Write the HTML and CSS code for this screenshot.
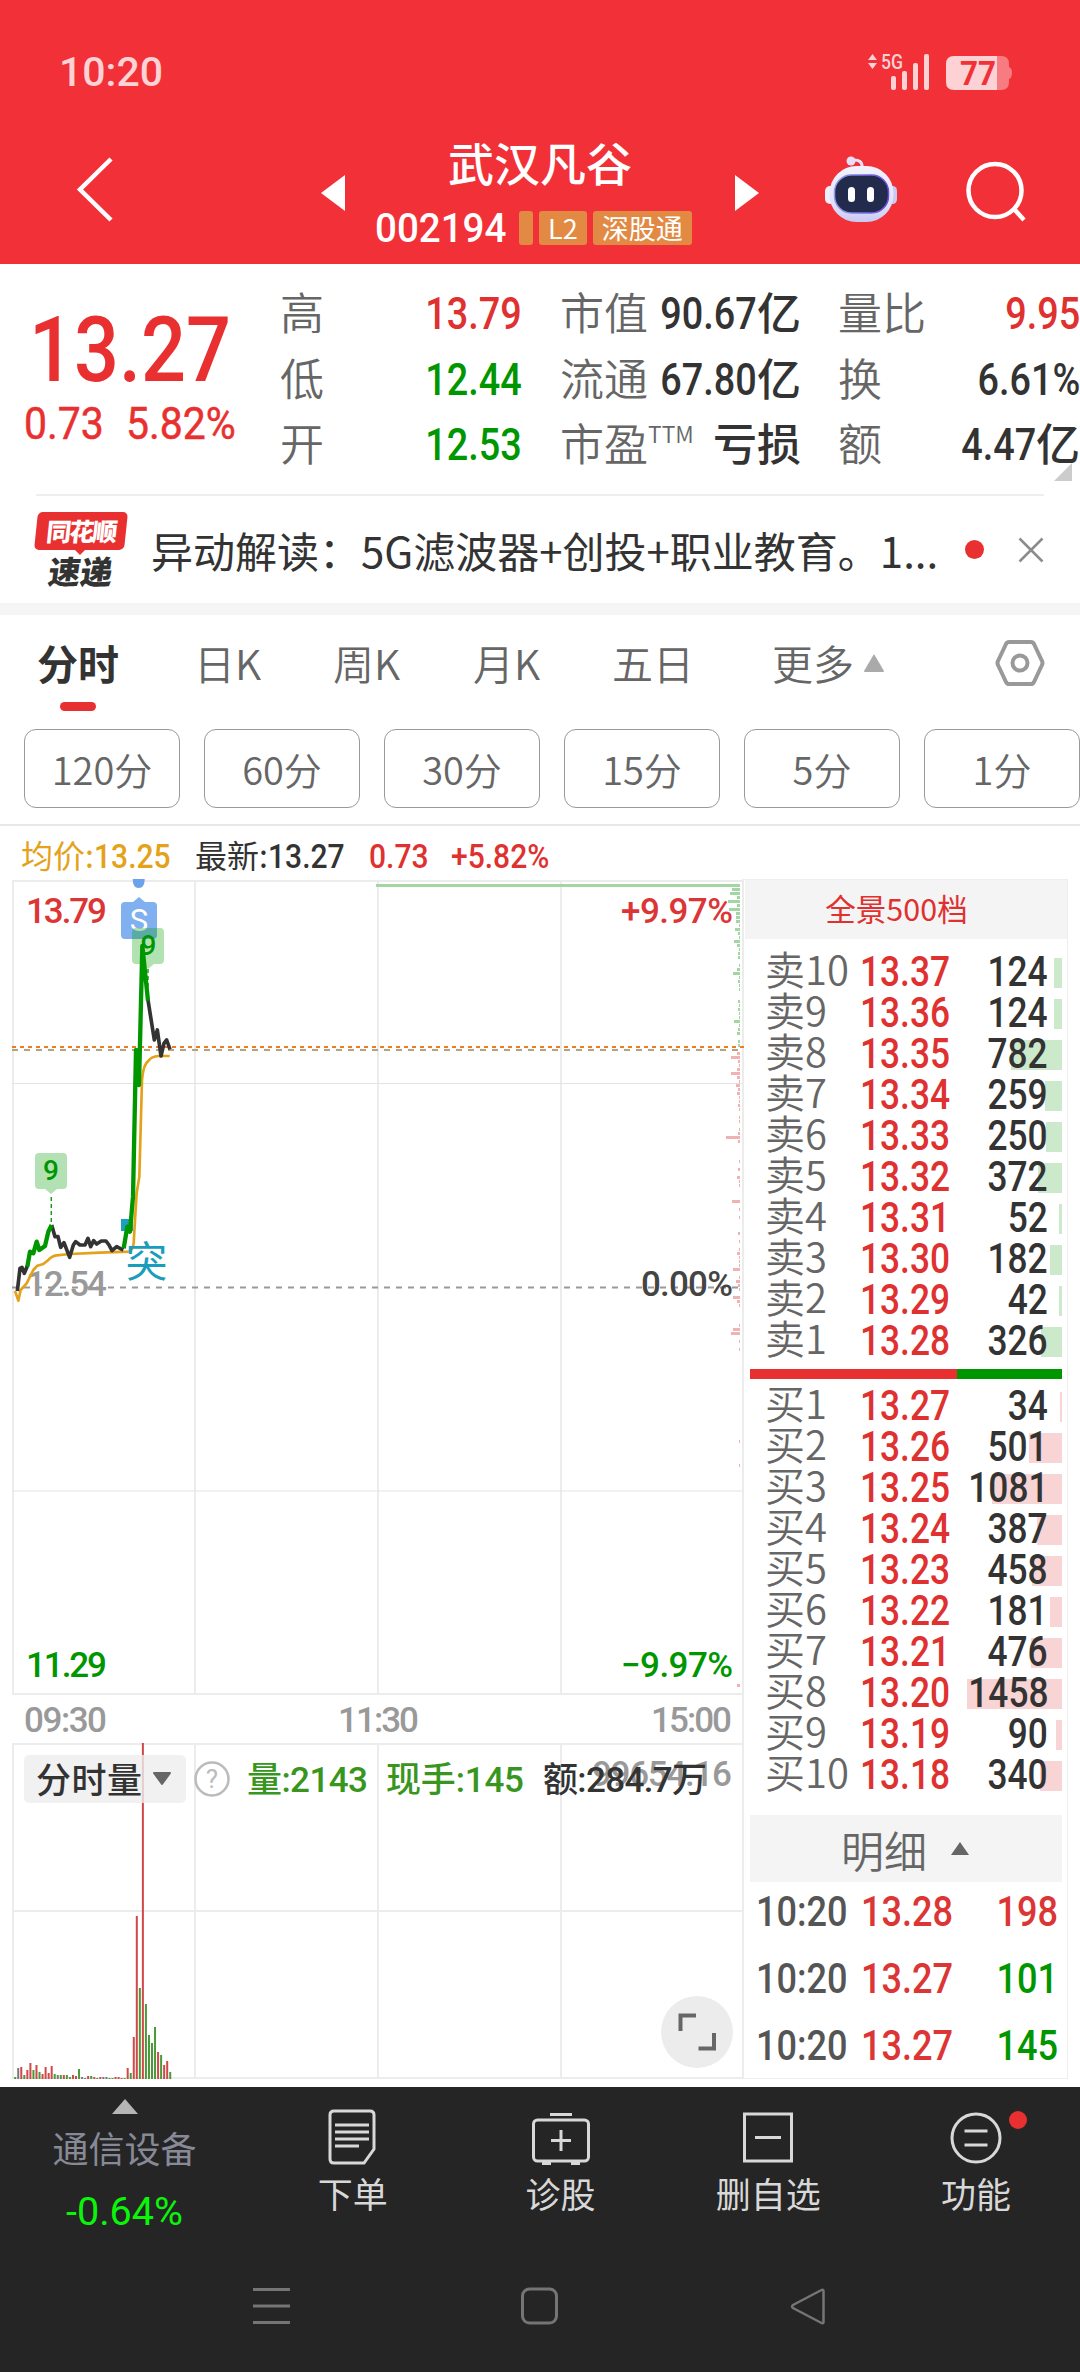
FILE: index.html
```html
<!DOCTYPE html>
<html lang="zh-CN">
<head>
    <meta charset="UTF-8">
    <meta name="viewport" content="width=device-width, initial-scale=1.0">
    <title>武汉凡谷 002194</title>
    <link rel="stylesheet" href="styles.css">
</head>
<body>
    <header class="header">
        <div class="status">
            <span class="clock num">10:20</span>
            <svg class="signal" width="150" height="50" viewBox="865 48 150 50">
                <g fill="#fcd2d4">
                    <path d="M868 60l4.500-6 4.500 6zM868 63l4.500 6 4.500-6z"/>
                    <text class="net" x="881" y="69" textLength="22" lengthAdjust="spacingAndGlyphs">5G</text>
                    <rect x="891" y="76" width="5" height="14" rx="2"/>
                    <rect x="902" y="71" width="5" height="19" rx="2"/>
                    <rect x="913" y="63" width="5" height="27" rx="2"/>
                    <rect x="924" y="54" width="5" height="36" rx="2"/>
                    <path d="M954 56h43v34h-43q-8 0-8-8v-18q0-8 8-8z"/>
                </g>
                <path d="M997 56h4q8 0 8 8v3q3 1 3 6t-3 6v3q0 8-8 8h-4z" fill="#f67c81"/>
                <text class="battery" x="960" y="85" textLength="36" lengthAdjust="spacingAndGlyphs">77</text>
            </svg>
        </div>
        <nav class="nav">
            <svg class="back" width="44" height="70" viewBox="0 0 44 70"><path d="M38 4L7 34.500 38 65" fill="none" stroke="#fff" stroke-width="4.500"/></svg>
            <svg class="prev" width="24" height="36" viewBox="0 0 24 36"><path d="M24 0v36L0 18z" fill="#fff"/></svg>
            <div class="stock">
                <div class="name">武汉凡谷</div>
                <div class="code">
                    <span class="num">002194</span>
                    <i class="tag cut"></i>
                    <i class="tag">L2</i>
                    <i class="tag">深股通</i>
                </div>
            </div>
            <svg class="next" width="24" height="36" viewBox="0 0 24 36"><path d="M0 0v36l24-18z" fill="#fff"/></svg>
            <svg class="robot" width="74" height="70" viewBox="0 0 74 70">
                <defs>
                    <linearGradient id="shell" x1="0" y1="0" x2="0" y2="1"><stop offset="0" stop-color="#f3f3fc"/><stop offset=".7" stop-color="#dfe0fa"/><stop offset="1" stop-color="#c9c9f3"/></linearGradient>
                    <linearGradient id="rim" x1="0" y1="0" x2="1" y2="0"><stop offset="0" stop-color="#8f9be8"/><stop offset="1" stop-color="#6a4be0"/></linearGradient>
                </defs>
                <path d="M37 12q1-9-10-8" fill="none" stroke="#e6e2fa" stroke-width="3"/>
                <circle cx="26" cy="5" r="4.500" fill="#e9dff5"/>
                <rect x="0" y="30" width="10" height="18" rx="5" fill="#eeeefc"/>
                <rect x="63" y="30" width="9" height="18" rx="4.500" fill="#c9c9f3"/>
                <rect x="4.500" y="10" width="64" height="56" rx="27" fill="url(#shell)"/>
                <rect x="9.500" y="19" width="54" height="38" rx="17" fill="#232b4d" stroke="url(#rim)" stroke-width="1.500"/>
                <rect x="23" y="31" width="7" height="15" rx="3.500" fill="#fff"/>
                <rect x="42" y="31" width="7" height="15" rx="3.500" fill="#fff"/>
            </svg>
            <svg class="search" width="64" height="64" viewBox="0 0 64 64" fill="none" stroke="#fff" stroke-width="4.500"><circle cx="31" cy="29.500" r="26.500"/><path d="M50 48l10 11"/></svg>
        </nav>
    </header>

    <section class="quote">
        <div class="price">
            <div class="last"><span class="num">13.27</span></div>
            <div class="change"><span class="num">0.73</span><span class="num">5.82%</span></div>
        </div>
        <dl class="col c1">
            <dt>高</dt><dd class="red"><span class="num">13.79</span></dd>
            <dt>低</dt><dd class="green"><span class="num">12.44</span></dd>
            <dt>开</dt><dd class="green"><span class="num">12.53</span></dd>
        </dl>
        <dl class="col c2">
            <dt>市值</dt><dd><span class="num">90.67</span>亿</dd>
            <dt>流通</dt><dd><span class="num">67.80</span>亿</dd>
            <dt>市盈<sup>TTM</sup></dt><dd>亏损</dd>
        </dl>
        <dl class="col c3">
            <dt>量比</dt><dd class="red"><span class="num">9.95</span></dd>
            <dt>换</dt><dd><span class="num">6.61%</span></dd>
            <dt>额</dt><dd><span class="num">4.47</span>亿</dd>
        </dl>
        <i class="corner"></i>
    </section>

    <section class="news">
        <div class="logo"><b>同花顺</b><em>速递</em></div>
        <p>异动解读：5G滤波器+创投+职业教育。1...</p>
        <i class="dot"></i>
        <svg width="26" height="26" viewBox="0 0 26 26"><path d="M1.500 1.500l23 23M24.500 1.500l-23 23" stroke="#8c8c8c" stroke-width="2.500"/></svg>
    </section>

    <section class="period">
        <ul class="tabs">
            <li class="on">分时</li>
            <li>日K</li>
            <li>周K</li>
            <li>月K</li>
            <li>五日</li>
            <li>更多<svg width="24" height="20" viewBox="0 0 24 20"><path d="M12 1l10 17q0 1-1 1H3q-1 0-1-1z" fill="#aaa"/></svg></li>
            <li class="gear"><svg width="50" height="48" viewBox="0 0 50 48" fill="none" stroke="#999" stroke-width="4"><path d="M14 3h22q2 0 3 2l8 17q1 2 0 4l-8 17q-1 2-3 2H14q-2 0-3-2L3 26q-1-2 0-4l8-17q1-2 3-2z"/><circle cx="25" cy="24" r="7.500"/></svg></li>
        </ul>
        <div class="minutes">
            <button>120分</button>
            <button>60分</button>
            <button>30分</button>
            <button>15分</button>
            <button>5分</button>
            <button>1分</button>
        </div>
    </section>

    <div class="legend">
        <span class="avg">均价:<span class="num">13.25</span></span>
        <span>最新:<span class="num">13.27</span></span>
        <span class="red"><span class="num">0.73</span></span>
        <span class="red"><span class="num">+5.82%</span></span>
    </div>

    <main class="main">
        <svg class="chart" width="744" height="1208" viewBox="0 879 744 1208">
            <!-- grid -->
            <g stroke="#ececec" stroke-width="2" fill="none">
                <path d="M12 881H744M12 1694H744M13 880V1695M195 881V1694M378 881V1694M561 881V1694"/>
                <path d="M12 1083.500H744M12 1491H744" stroke="#e3e3e3" stroke-width="1"/>
                <path d="M12 1744H744M12 1911H744M12 2078H744M13 1743V2079M195 1743V2079M378 1743V2079M561 1743V2079"/>
                <path d="M743.500 879V2079" stroke-width="3"/>
            </g>
            <path d="M12 1287.500H739" stroke="#999" stroke-width="2" stroke-dasharray="6 6"/>
            <path d="M12 1050H739" stroke="#b7a27b" stroke-width="2" stroke-dasharray="6 6"/>
            <path d="M12 1047H744" stroke="#ed7a25" stroke-width="2" stroke-dasharray="4 4"/>
            <g id="depth"></g>
            <g id="volume"></g>

            <text class="d grey" x="26" y="1295.500" textLength="81">12.54</text>

            <!-- signal markers -->
            <path d="M132.700 879h12q0 9-6 9t-6-9z" fill="#6aa3ec"/>
            <path d="M133 902l6-5 6 5h8q4 0 4 4v29q0 4-4 4h-28q-4 0-4-4v-29q0-4 4-4z" fill="#81b0f0"/>
            <text class="mark" x="139" y="931" fill="#fff">S</text>
            <path d="M136 928h24q4 0 4 4v28q0 4-4 4h-6l-6 5-6-5h-6q-4 0-4-4v-28q0-4 4-4z" fill="#00a000" fill-opacity=".3"/>
            <path d="M39 1153h24q4 0 4 4v28q0 4-4 4h-6l-6 5-6-5h-6q-4 0-4-4v-28q0-4 4-4z" fill="#b3e1b3"/>
            <text class="mark nine" x="51" y="1180">9</text>
            <text class="mark nine" x="148.500" y="955">9</text>
            <path d="M51.300 1197v28M148 969v20" stroke="#1b9a1b" stroke-width="1.500" stroke-dasharray="4 3"/>
            <rect x="121" y="1219" width="12" height="12" fill="#1aa0c0"/>

            <g transform="translate(0 860) scale(.33333)" fill="none" stroke-linejoin="round">
                <path stroke="#e3a21a" stroke-width="8" d="M45 1293L55 1322 62 1290 80 1270 100 1230 112 1217 130 1212 145 1200Q155 1188 170 1186L210 1182 300 1178 385 1175Q398 1172 401 1150L405 1080 410 1000 418 950 426 660Q430 612 445 603 455 589 475 588H509"/>
                <path stroke="#333" stroke-width="11" d="M52 1293L60 1225 66 1222 73 1240 82 1218M155 1095L165 1130 174 1130 182 1162 192 1148 209 1192 220 1155 227 1145 240 1155H255L264 1135 272 1160 281 1142 290 1152 304 1143H318L327 1155 336 1172 350 1160 360 1165 370 1170M444 420L463 540 472 510 483 588 492 550 500 540 510 568"/>
                <path stroke="#009600" stroke-width="13" d="M82 1220L90 1175 100 1180 110 1145 118 1170 135 1158 145 1115 155 1095M371 1165L382 1100 390 1115 399 1010 408 570 417 675 427 258 444 422"/>
            </g>
            <text class="tu" x="146.500" y="1277">突</text>

            <!-- axis labels -->
            <text class="d red" x="26" y="923" textLength="81">13.79</text>
            <text class="d red" x="621" y="923" textLength="112">+9.97%</text>
            <text class="d dark" x="641" y="1295.500" textLength="92">0.00%</text>
            <text class="d green" x="26" y="1676.500" textLength="81">11.29</text>
            <text class="d green" x="621" y="1676.500" textLength="112">−9.97%</text>
            <text class="d grey" x="24" y="1732" textLength="83">09:30</text>
            <text class="d grey" x="338" y="1732" textLength="81">11:30</text>
            <text class="d grey" x="651" y="1732" textLength="81">15:00</text>

            <!-- volume header -->
            <rect x="24" y="1755" width="162" height="48" rx="5" fill="#eee" fill-opacity=".8"/>
            <text class="cn" x="36" y="1793" textLength="106">分时量</text>
            <path d="M154 1773h16l-8 11z" fill="#666" stroke="#666" stroke-linejoin="round" stroke-width="2"/>
            <circle cx="212" cy="1779" r="16.500" fill="none" stroke="#bbb" stroke-width="2.500"/>
            <text class="ask" x="212" y="1788">?</text>
            <text class="cn vol" x="247" y="1792" textLength="121">量:2143</text>
            <text class="cn vol" x="386" y="1792" textLength="138">现手:145</text>
            <text class="d grey" x="592" y="1786" textLength="140">99654.16</text>
            <text class="cn" x="543" y="1792" textLength="164">额:284.7万</text>

            <circle cx="697" cy="2032" r="36" fill="#ececec"/>
            <path d="M680.500 2031V2015.500H696M698.500 2048.500H714V2033" fill="none" stroke="#666" stroke-width="4"/>
        </svg>

        <aside class="book">
            <div class="book-head">全景500档</div>
            <div class="rows" id="sell"></div>
            <div class="ratio"><i></i></div>
            <div class="rows" id="buy"></div>
            <div class="detail-head">明细<svg width="18" height="13" viewBox="0 0 18 13"><path d="M9 0l9 13H0z" fill="#666"/></svg></div>
            <div class="trade"><span class="num">10:20</span><span class="num red">13.28</span><span class="num red">198</span></div>
            <div class="trade"><span class="num">10:20</span><span class="num red">13.27</span><span class="num green">101</span></div>
            <div class="trade"><span class="num">10:20</span><span class="num red">13.27</span><span class="num green">145</span></div>
        </aside>
    </main>

    <footer class="footer">
        <div class="actions">
            <div class="sector">
                <svg width="26" height="15" viewBox="0 0 26 15"><path d="M13 0l13 15H0z" fill="#b5b5b5"/></svg>
                <span>通信设备</span>
                <b>-0.64%</b>
            </div>
            <div class="action">
                <svg width="60" height="60" viewBox="0 0 60 60" fill="none" stroke="#d8d8d8" stroke-width="3"><path d="M11 4h36q4 0 4 4v34L41 56H11q-4 0-4-4V8q0-4 4-4z"/><path d="M12 18h34M12 25h34M12 32h34M12 39h24"/></svg>
                下单
            </div>
            <div class="action">
                <svg width="60" height="60" viewBox="0 0 60 60" fill="none" stroke="#d8d8d8" stroke-width="3"><rect x="2.500" y="13" width="55" height="41" rx="4"/><path d="M19 7.500h22M30 23v21M20 33.500h20M11 56.500h9M40 56.500h9"/></svg>
                诊股
            </div>
            <div class="action">
                <svg width="60" height="60" viewBox="0 0 60 60" fill="none" stroke="#d8d8d8" stroke-width="3"><rect x="6.500" y="7" width="47" height="47"/><path d="M17 30.500h26"/></svg>
                删自选
            </div>
            <div class="action">
                <svg width="60" height="60" viewBox="0 0 60 60" fill="none" stroke="#d8d8d8" stroke-width="3"><circle cx="30" cy="31" r="24"/><path d="M18.500 24h23M18.500 38h23"/></svg>
                功能
                <i class="badge"></i>
            </div>
        </div>
        <div class="system">
            <svg width="38" height="38" viewBox="0 0 38 38"><path d="M0 2.500h37M0 19h37M0 35.500h37" stroke="#757575" stroke-width="3"/></svg>
            <svg width="38" height="38" viewBox="0 0 38 38"><rect x="1.500" y="2" width="34" height="34" rx="7" fill="none" stroke="#757575" stroke-width="3"/></svg>
            <svg width="38" height="38" viewBox="0 0 38 38"><path d="M34.500 4v31q0 2-2 1L4 21q-2-1.500 0-3L32.500 3q2-1 2 1z" fill="none" stroke="#757575" stroke-width="2.500"/></svg>
        </div>
    </footer>
    <script src="script.js"></script>
</body>
</html>
```
FILE: styles.css
```css
* {
    box-sizing: border-box;
}
body {
    margin: 0;
    width: 1080px;
    height: 2372px;
    overflow: hidden;
    background: #fff;
    color: #333;
    font-family: "Noto Sans CJK SC", sans-serif;
}
ul, dl, dd, p {
    margin: 0;
    padding: 0;
    list-style: none;
}
i, em {
    font-style: normal;
}
svg {
    display: block;
    flex: none;
}
.num {
    display: inline-block;
    font-family: Roboto, sans-serif;
    font-weight: 500;
    transform: scaleX(.84);
    transform-origin: 0 50%;
}
.red { color: #e03131; }
.green { color: #009600; }

/* header */
.header {
    height: 264px;
    background: #f23038;
    color: #fff;
}
.status {
    display: flex;
    justify-content: space-between;
    height: 120px;
    padding: 48px 65px 0 59px;
}
.clock {
    font-size: 41px;
    line-height: 48px;
    color: #fcd2d4;
    transform: none;
}
.net {
    font: 500 20px Roboto, sans-serif;
}
.battery {
    font: 700 33px Roboto, sans-serif;
    fill: #f23038;
}
.nav {
    display: flex;
    height: 144px;
    padding-left: 73px;
}
.back { margin-top: 35px; }
.prev { margin: 55px 0 0 204px; }
.next { margin-top: 55px; }
.stock {
    width: 390px;
    padding-top: 8px;
}
.name {
    font-size: 46px;
    line-height: 66px;
    text-align: center;
    font-weight: 500;
}
.code {
    display: flex;
    align-items: center;
    height: 40px;
    margin-top: 10px;
    padding: 8px 0 0 30px;
}
.code .num {
    width: 144px;
    font-size: 41px;
    transform: scaleX(.94);
}
.tag {
    height: 34px;
    margin-right: 6px;
    padding: 0 9px;
    border-radius: 3px;
    background: #e28a44;
    font-size: 27px;
    line-height: 33px;
}
.tag.cut {
    width: 14px;
    padding: 0;
}
.robot { margin: 36px 0 0 66px; }
.search { margin: 41px 0 0 65px; }

/* quote */
.quote {
    position: relative;
    display: flex;
    height: 232px;
    padding-top: 16px;
}
.quote:after {
    content: "";
    position: absolute;
    left: 36px;
    right: 36px;
    bottom: 0;
    height: 2px;
    background: #eee;
}
.price {
    width: 280px;
    color: #e93030;
}
.last {
    padding: 12px 0 0 29px;
    font-size: 90px;
    line-height: 100px;
}
.last .num {
    transform: scaleX(.88);
}
.change {
    display: flex;
    margin-top: -5px;
    padding-left: 24px;
    font-size: 45px;
    line-height: 56px;
}
.change .num {
    width: 102px;
    font-weight: 400;
    -webkit-text-stroke: .5px;
    transform: scaleX(.91);
}
.col {
    display: grid;
    grid-template-columns: auto minmax(0, 1fr);
    grid-auto-rows: 65.5px;
    font-size: 44px;
    line-height: 62px;
}
.c1 { width: 242px; }
.c2 { width: 241px; margin-left: 38px; }
.c3 { width: 242px; margin-left: 37px; }
.col dt {
    color: #666;
    font-weight: 350;
    white-space: nowrap;
}
.col dd {
    display: flex;
    justify-content: flex-end;
    font-weight: 500;
    white-space: nowrap;
}
.col .num {
    padding-top: 3px;
    font-size: 45px;
    transform-origin: 100% 50%;
}
sup {
    font-size: 23px;
    line-height: 20px;
    vertical-align: 18px;
}
.corner {
    position: absolute;
    right: 8px;
    bottom: 15px;
    border-left: 18px solid transparent;
    border-bottom: 18px solid #ccc;
}

/* news */
.news {
    display: flex;
    align-items: center;
    height: 119px;
    padding: 0 36px;
    border-bottom: 12px solid #f5f5f5;
}
.logo {
    position: relative;
    width: 90px;
    height: 76px;
    text-align: center;
}
.logo:after {
    content: "";
    position: absolute;
    left: 38px;
    top: 37px;
    border: 6px solid transparent;
    border-top-color: #e93030;
    border-bottom: 0;
}
.logo b {
    display: block;
    height: 38px;
    border-radius: 5px;
    background: #e93030;
    color: #fff;
    font-size: 25px;
    line-height: 37px;
    font-weight: 900;
    letter-spacing: -2px;
    transform: skewX(-6deg);
}
.logo em {
    display: block;
    font-size: 32px;
    line-height: 40px;
    font-weight: 900;
    transform: skewX(-8deg);
}
.news p {
    width: 790px;
    margin-left: 25px;
    font-size: 42px;
    line-height: 60px;
    white-space: nowrap;
}
.dot {
    width: 19px;
    height: 19px;
    margin: 0 34px 0 24px;
    border-radius: 50%;
    background: #e93030;
}

/* period tabs */
.period {
    height: 211px;
    border-bottom: 2px solid #e8e8e8;
}
.tabs {
    display: grid;
    grid-template-columns: 157px 139px 140px 139px 160px 223px 60px;
    height: 114px;
    padding-left: 37px;
    color: #666;
    font-size: 41px;
    line-height: 94px;
    font-weight: 350;
}
.tabs .on {
    position: relative;
    color: #333;
    font-weight: 700;
}
.tabs .on:after {
    content: "";
    position: absolute;
    left: 23px;
    top: 87px;
    width: 36px;
    height: 9px;
    border-radius: 5px;
    background: #e93030;
}
.tabs li {
    display: flex;
}
.tabs li svg { margin: 38px 0 0 8px; }
.tabs .gear svg { margin: 24px 0 0 0; }
.minutes {
    display: flex;
    gap: 24px;
    padding-left: 24px;
}
.minutes button {
    flex: none;
    width: 156px;
    height: 79px;
    padding: 0;
    border: 1px solid #999;
    border-radius: 12px;
    background: #fff;
    color: #666;
    font: 350 38px/70px "Noto Sans CJK SC", sans-serif;
}

/* legend */
.legend {
    display: flex;
    height: 53px;
    padding-left: 21px;
    font-size: 32px;
    line-height: 56px;
}
.legend > span { width: 174px; }
.legend > .red { width: 82px; }
.legend .avg { color: #e3a21a; }
.legend .num {
    font-size: 33px;
    transform: scaleX(.91);
}

/* chart */
.main {
    display: flex;
    height: 1208px;
}
.chart text {
    font-family: Roboto, "Noto Sans CJK SC", sans-serif;
}
.chart .d {
    font-size: 35px;
    font-weight: 500;
}
.chart .red { fill: #dc3535; }
.chart .green { fill: #009600; }
.chart .grey { fill: #999; }
.chart .dark { fill: #444; }
.chart .mark {
    font-size: 31px;
    text-anchor: middle;
}
.chart .nine {
    fill: #009600;
    font-size: 28px;
    font-weight: 500;
}
.chart .tu {
    fill: #1a9dbb;
    font-size: 42px;
    text-anchor: middle;
}
.chart .cn {
    font-size: 35px;
    fill: #333;
    font-weight: 500;
}
.chart .vol { fill: #38961f; }
.chart .ask {
    fill: #bbb;
    font-size: 26px;
    text-anchor: middle;
}

/* order book */
.book {
    width: 324px;
    height: 1200px;
    padding: 0 5px 0 6px;
    border: 1px solid #eee;
    border-left: 0;
}
.book-head {
    height: 59px;
    margin: 0 -5px 13px -5px;
    padding-right: 19px;
    background: #f4f4f4;
    color: #e03131;
    text-align: center;
    font-size: 30.5px;
    line-height: 56px;
}
.row {
    position: relative;
    display: grid;
    grid-template-columns: 95px 90px minmax(0, 1fr);
    height: 41px;
    padding: 0 14px 0 15px;
    line-height: 40px;
}
.row .label {
    color: #666;
    font-size: 40px;
    line-height: 33px;
    font-weight: 350;
    white-space: nowrap;
}
.row .num {
    position: relative;
    font-size: 42px;
}
.row .num:last-child {
    justify-self: end;
    transform-origin: 100% 50%;
}
.row .bar {
    position: absolute;
    right: 0;
    top: 6px;
    height: 30px;
    background: #cce9cc;
}
#buy .bar { background: #f8d4d5; }
.ratio {
    height: 10px;
    margin: 7px 0 7px;
    background: #009600;
}
.ratio i {
    display: block;
    width: 207px;
    height: 10px;
    background: #e93030;
}
.detail-head {
    display: flex;
    align-items: center;
    gap: 24px;
    height: 67px;
    margin-top: 19px;
    padding-left: 91px;
    background: #f4f4f4;
    color: #666;
    font-size: 43px;
    font-weight: 350;
    line-height: 64px;
}
.trade {
    display: grid;
    grid-template-columns: 105px 115px 1fr;
    height: 67px;
    padding: 0 4px 0 6px;
    font-size: 43px;
    line-height: 59px;
    color: #555;
}
.trade .red { color: #dc3535; }
.trade .green { color: #009600; }
.trade .num:last-child {
    text-align: right;
    transform-origin: 100% 50%;
}

/* bottom bars */
.footer {
    height: 285px;
    background: #252525;
    color: #d8d8d8;
}
.actions {
    display: flex;
    height: 180px;
}
.sector {
    display: flex;
    flex-direction: column;
    align-items: center;
    width: 249px;
    padding-top: 12px;
}
.sector span {
    margin-top: 7px;
    color: #878997;
    font-size: 36px;
    line-height: 52px;
}
.sector b {
    margin-top: 14px;
    color: #0bf50b;
    font: 400 39.5px/50px Roboto, sans-serif;
}
.action {
    position: relative;
    display: flex;
    flex-direction: column;
    align-items: center;
    width: 207.75px;
    padding-top: 20px;
    font-size: 35px;
    line-height: 52px;
}
.badge {
    position: absolute;
    left: 137px;
    top: 24px;
    width: 18px;
    height: 18px;
    border-radius: 50%;
    background: #e93030;
}
.system {
    display: flex;
    gap: 230px;
    padding: 20px 0 0 253px;
}
```
FILE: script.js
```js
// order book levels: price, lots
const sell = [
    ['13.37', 124], ['13.36', 124], ['13.35', 782], ['13.34', 259], ['13.33', 250],
    ['13.32', 372], ['13.31', 52], ['13.30', 182], ['13.29', 42], ['13.28', 326]
];
const buy = [
    ['13.27', 34], ['13.26', 501], ['13.25', 1081], ['13.24', 387], ['13.23', 458],
    ['13.22', 181], ['13.21', 476], ['13.20', 1458], ['13.19', 90], ['13.18', 340]
];
const maxLots = 1458;

function drawRows(id, name, levels, descending) {
    document.getElementById(id).innerHTML = levels.map(([price, lots], i) => {
        const level = descending ? levels.length - i : i + 1;
        const width = Math.max(2, Math.round(lots / maxLots * 95));
        return `<div class="row"><i class="bar" style="width:${width}px"></i>` +
            `<span class="label">${name}${level}</span>` +
            `<span class="num red">${price}</span><span class="num">${lots}</span></div>`;
    }).join('');
}
drawRows('sell', '卖', sell, true);
drawRows('buy', '买', buy, false);

// resting orders along the right edge, one every 4px
const depth = [364, 8, 10, 3, 12, 3, 11, 4, 4, 4, 1, 5, 2, 1, 6, 3, 1, 2, 2, 0, 1, 3, 7, 1, 2, 1, 1, 0, 0, 2, 1,
    2, 1, 1, 6, 1, 2, 3, 0, 2, 2, 0, 3, 9, 2, 1, 3, 9, 3, 1, 4, 2, 3, 1, 1, 2, 1, 0, 1, 1, 0, 1, 2, 14, 2, 0,
    0, 0, 0, 1, 0, 2, 0, 3, 1, 1, 0, 0, 0, 8, 0, 1, 0, 1, 0, 0, 0, 2, 0, 1, 0, 1, 3, 1, 1, 1, 7, 0, 1, 4, 2, 1,
    0, 7, 3, 1, 0, 0, 0, 0, 1, 7, 9, 0, 1, 0, 1];
depth[139] = 1;
depth[145] = 1;
depth[200] = 3;
document.getElementById('depth').innerHTML = depth.map((len, i) =>
    `<rect x="${740 - len}" y="${884 + i * 4}" width="${len}" height="3" fill="${i < 41 ? '#a3d6a3' : '#efb3b3'}"/>`
).join('');

// volume per minute, r = up, g = down, k = flat
const volume = ('2g 11k 12r 4g 9r 16r 9g 14r 7g 5r 12r 6r 13r 5g 4k 4g 4r 4g 2g 4r 3r 10g 2k 1k 3r 3g 2r 1g 2r 2k 2k 1g 1g ' +
    '2r 2r 1r 1g 11r 6g 42r 163r 91g 336r 75g 44g 36g 52g 27r 24g 14r 18r 7g').split(' ');
const colors = { r: '#d04848', g: '#4a9a38', k: '#777' };
document.getElementById('volume').innerHTML = volume.map((v, i) => {
    const h = parseInt(v);
    return `<rect x="${14.2 + i * 3.04}" y="${2079 - h}" width="2" height="${h}" fill="${colors[v.slice(-1)]}"/>`;
}).join('');
```
